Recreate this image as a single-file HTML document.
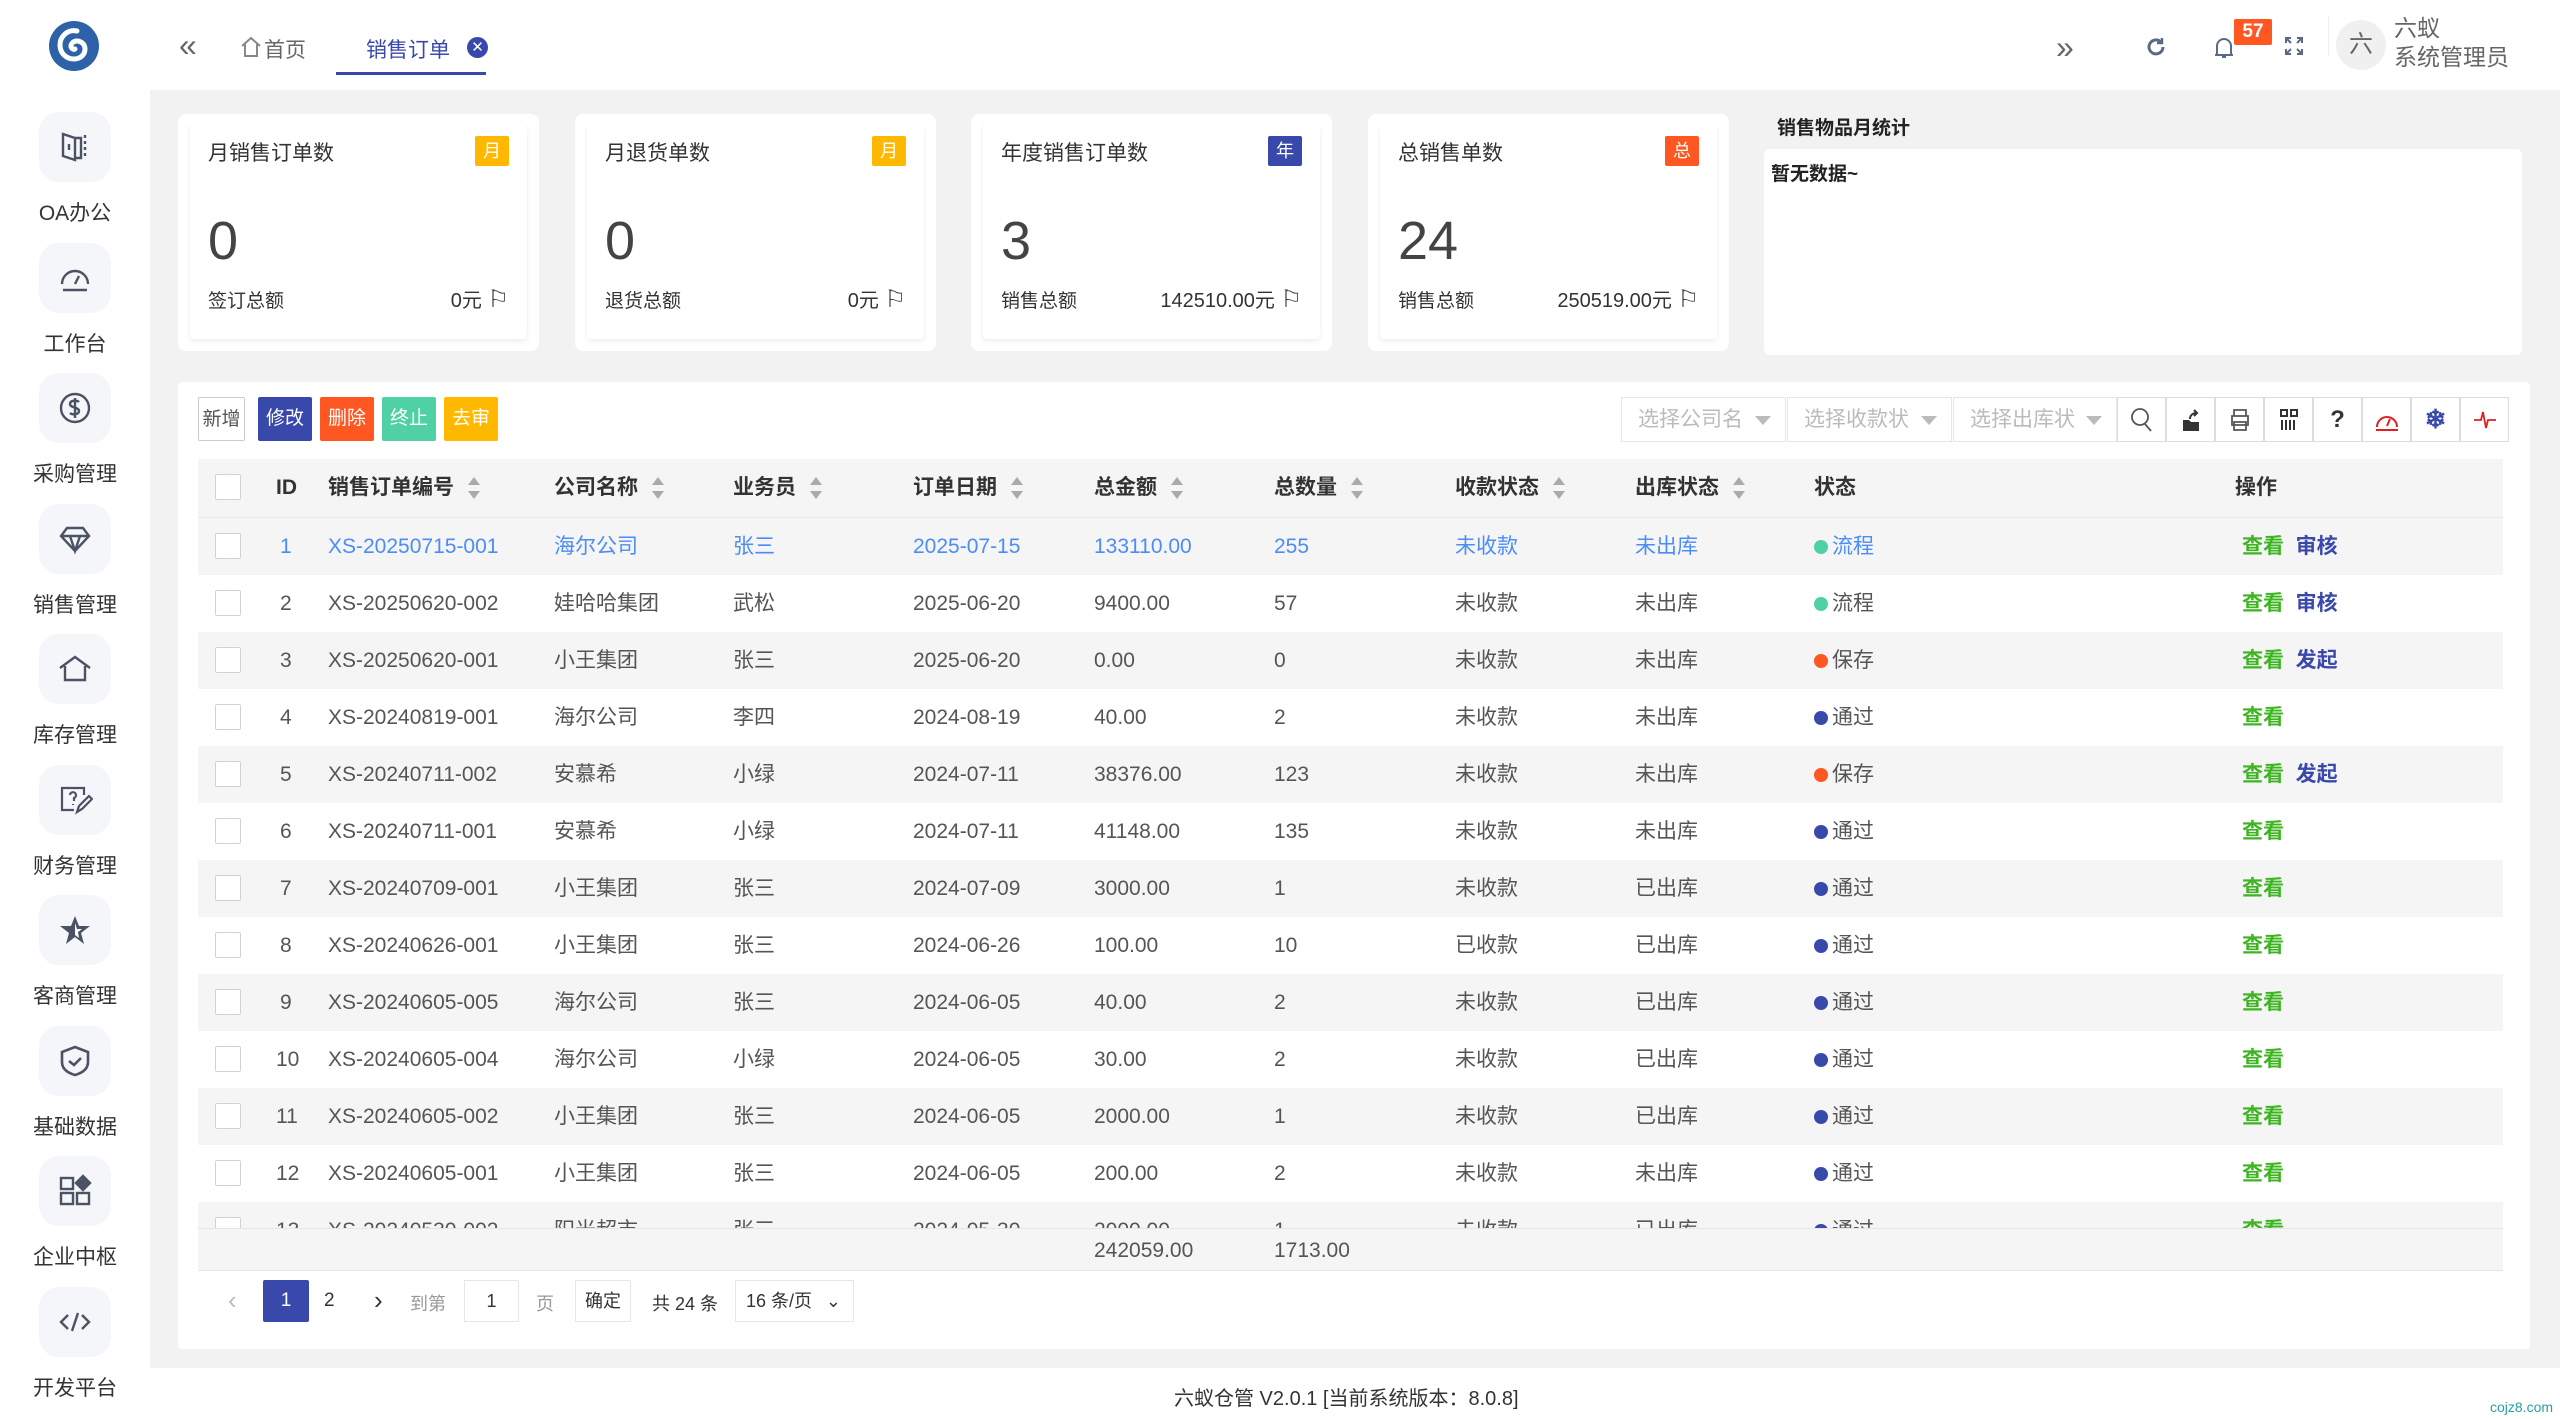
<!DOCTYPE html>
<html><head><meta charset="utf-8"><style>
*{box-sizing:border-box;margin:0;padding:0}
body{width:2560px;height:1419px;overflow:hidden;background:#f2f2f2;font-family:"Liberation Sans","Noto Sans CJK SC",sans-serif;color:#333;position:relative}
.abs{position:absolute}
#side{left:0;top:0;width:150px;height:1419px;background:#fff}
.ib{position:absolute;left:39px;width:72px;height:70px;background:#f4f6fa;border-radius:20px;display:flex;align-items:center;justify-content:center}
.lb{position:absolute;left:0;width:150px;text-align:center;font-size:21px;color:#333}
#hdr{left:150px;top:0;width:2410px;height:90px;background:#fff}
.card{position:absolute;top:114px;height:237px;background:#fff;border-radius:8px}
.card .in{position:absolute;left:12px;top:10px;right:12px;bottom:12px;box-shadow:0 2px 6px rgba(0,0,0,.08);border-radius:4px}
.ct{position:absolute;left:30px;top:23px;font-size:21px;color:#333}
.bd{position:absolute;right:30px;top:22px;width:34px;height:30px;color:#fff;font-size:18px;text-align:center;line-height:30px;border-radius:2px}
.num{position:absolute;left:30px;top:96px;font-size:54px;color:#444}
.bl{position:absolute;left:30px;top:172px;font-size:19px;color:#333}
.br{position:absolute;right:30px;top:170px;font-size:20px;color:#333}
.btn{position:absolute;top:397px;height:44px;color:#fff;font-size:19px;line-height:44px;text-align:center;border-radius:2px}
.sel{position:absolute;top:397px;height:45px;border:1px solid #e6e6e6;color:#bbb;font-size:21px;line-height:43px;padding-left:16px}
.sel:after{content:"";position:absolute;right:14px;top:18px;border:8px solid transparent;border-top:9px solid #bbb}
.tb{position:absolute;top:397px;width:49px;height:45px;border:1px solid #ddd;display:flex;align-items:center;justify-content:center}
.row{position:absolute;left:198px;width:2305px;height:57px;font-size:21px;color:#555}
.row div{position:absolute;top:0;line-height:57px;white-space:nowrap}
.cb{width:26px;height:26px;border:1px solid #d2d2d2;background:#fff;border-radius:2px;top:15px!important;left:17px}
.hd{font-weight:bold;color:#333}
.so{display:inline-block;vertical-align:middle;margin-left:14px;width:12px;height:22px;position:relative}
.so:before{content:"";position:absolute;left:0;top:0;border:6px solid transparent;border-bottom:8px solid #aaa;border-top:0}
.so:after{content:"";position:absolute;left:0;bottom:0;border:6px solid transparent;border-top:8px solid #aaa;border-bottom:0}
.dot{display:inline-block;width:14px;height:14px;border-radius:50%;margin-right:4px;vertical-align:-1px}
.g{color:#3cb521;font-weight:bold}.bl2{color:#3949ab;font-weight:bold}
.lk div{color:#4a8df8}
</style></head><body>
<div id="side" class="abs">
<svg class="abs" style="left:47px;top:19px" width="54" height="54" viewBox="0 0 54 54"><circle cx="27" cy="27" r="25" fill="#2d62a8"/><path d="M30 12c-9-2-17 5-17 14 0 8 6 14 14 14 6 0 11-4 11-10 0-5-4-8-8-8-4 0-6 3-6 5 0 2 2 4 4 3" fill="none" stroke="#fff" stroke-width="5" stroke-linecap="round"/></svg>
<div class="ib" style="top:112px"><svg width="36" height="36" viewBox="0 0 36 36" fill="none" stroke="#4a5263" stroke-width="2.4"><path d="M6 5l12 4v22L6 27z M18 9h6v20h-6"/><path d="M28 6v24" stroke-dasharray="3 3"/><path d="M12 15v6"/></svg></div>
<div class="lb" style="top:197px">OA办公</div>
<div class="ib" style="top:243px"><svg width="36" height="36" viewBox="0 0 36 36" fill="none" stroke="#4a5263" stroke-width="2.4"><path d="M5 24a13 13 0 1 1 26 0"/><path d="M18 24l4-8"/><path d="M6 30h24"/></svg></div>
<div class="lb" style="top:328px">工作台</div>
<div class="ib" style="top:373px"><svg width="36" height="36" viewBox="0 0 36 36" fill="none" stroke="#4a5263" stroke-width="2.4"><circle cx="18" cy="18" r="14"/><path d="M22 12c-2-2-9-2-9 2s9 3 9 7-7 4-9 2M18 8v20"/></svg></div>
<div class="lb" style="top:458px">采购管理</div>
<div class="ib" style="top:504px"><svg width="36" height="36" viewBox="0 0 36 36" fill="none" stroke="#4a5263" stroke-width="2.4"><path d="M10 7h16l6 8-14 15L4 15z M4 15h28 M13 15l5 15 5-15"/></svg></div>
<div class="lb" style="top:589px">销售管理</div>
<div class="ib" style="top:634px"><svg width="36" height="36" viewBox="0 0 36 36" fill="none" stroke="#4a5263" stroke-width="2.4"><path d="M3 17L18 6l15 11M8 15v14h20V15"/></svg></div>
<div class="lb" style="top:719px">库存管理</div>
<div class="ib" style="top:765px"><svg width="36" height="36" viewBox="0 0 36 36" fill="none" stroke="#4a5263" stroke-width="2.2"><path d="M27 13V6H5v22h12"/><path d="M13 13a3 3 0 1 1 4 3v3M16 22v1"/><path d="M20 30l2-6 10-10 3 3-10 10z"/></svg></div>
<div class="lb" style="top:850px">财务管理</div>
<div class="ib" style="top:895px"><svg width="36" height="36" viewBox="0 0 36 36"><path d="M18 4l4 10h11l-9 7 3 11-9-7-9 7 3-11-9-7h11z" fill="#4a5263"/><path d="M18 11l2 6h5l-4 3 1 6-4-3z" fill="#fff"/></svg></div>
<div class="lb" style="top:980px">客商管理</div>
<div class="ib" style="top:1026px"><svg width="36" height="36" viewBox="0 0 36 36" fill="none" stroke="#4a5263" stroke-width="2.6"><path d="M18 4l13 5v10c0 7-6 11-13 13C11 30 5 26 5 19V9z"/><path d="M12 18l5 4 7-7"/></svg></div>
<div class="lb" style="top:1111px">基础数据</div>
<div class="ib" style="top:1156px"><svg width="36" height="36" viewBox="0 0 36 36" fill="none" stroke="#4a5263" stroke-width="2.4"><rect x="4" y="5" width="12" height="11"/><rect x="4" y="20" width="12" height="11"/><rect x="20" y="20" width="12" height="11"/><path d="M26 3l7 7-7 7-7-7z" fill="#4a5263"/></svg></div>
<div class="lb" style="top:1241px">企业中枢</div>
<div class="ib" style="top:1287px"><svg width="36" height="36" viewBox="0 0 36 36" fill="none" stroke="#4a5263" stroke-width="2.4"><path d="M11 11l-7 7 7 7M25 11l7 7-7 7M21 9l-6 18"/></svg></div>
<div class="lb" style="top:1372px">开发平台</div>
</div>

<div id="hdr" class="abs"></div>
<div class="abs" style="left:179px;top:27px;font-size:32px;color:#666">«</div>
<svg class="abs" style="left:240px;top:36px" width="22" height="22" viewBox="0 0 22 22" fill="none" stroke="#888" stroke-width="2"><path d="M2 10L11 2l9 8M5 8v12h12V8"/></svg>
<div class="abs" style="left:264px;top:34px;font-size:21px;color:#666">首页</div>
<div class="abs" style="left:366px;top:34px;font-size:21px;color:#3949ab">销售订单</div>
<div class="abs" style="left:467px;top:37px;width:21px;height:21px;border-radius:50%;background:#3949ab;color:#fff;font-size:15px;text-align:center;line-height:21px">✕</div>
<div class="abs" style="left:336px;top:72px;width:150px;height:3px;background:#3949ab"></div>
<div class="abs" style="left:2056px;top:29px;font-size:32px;color:#666">»</div>
<svg class="abs" style="left:2145px;top:36px" width="22" height="22" viewBox="0 0 22 22" fill="none" stroke="#5a6a85" stroke-width="3"><path d="M18 11a7 7 0 1 1-2-5"/><path d="M17 2v5h-5" stroke-width="2.5"/></svg>
<svg class="abs" style="left:2213px;top:36px" width="22" height="24" viewBox="0 0 22 24" fill="none" stroke="#5a6a85" stroke-width="2"><path d="M4 18V10a7 7 0 0 1 14 0v8M2 19h18M9 21h4"/></svg>
<div class="abs" style="left:2234px;top:19px;width:38px;height:26px;background:#ff5722;color:#fff;font-weight:bold;font-size:19px;text-align:center;line-height:26px;border-radius:2px">57</div>
<svg class="abs" style="left:2285px;top:37px" width="18" height="18" viewBox="0 0 18 18" fill="none" stroke="#5a6a85" stroke-width="2"><path d="M1 6V1h5M12 1h5v5M17 12v5h-5M6 17H1v-5M2 2l4 4M16 2l-4 4M16 16l-4-4M2 16l4-4"/></svg>
<div class="abs" style="left:2328px;top:16px;width:1px;height:40px;background:#eee"></div>
<div class="abs" style="left:2336px;top:20px;width:50px;height:50px;border-radius:50%;background:#f0f0f0;color:#666;font-size:24px;text-align:center;line-height:50px">六</div>
<div class="abs" style="left:2394px;top:14px;font-size:23px;color:#666;line-height:29px">六蚁<br>系统管理员</div>

<div class="card" style="left:178px;width:361px"><div class="in"></div><div class="ct">月销售订单数</div><div class="bd" style="background:#ffb800">月</div><div class="num">0</div><div class="bl">签订总额</div><div class="br">0元 <span style="font-size:24px">⚐</span></div></div>
<div class="card" style="left:575px;width:361px"><div class="in"></div><div class="ct">月退货单数</div><div class="bd" style="background:#ffb800">月</div><div class="num">0</div><div class="bl">退货总额</div><div class="br">0元 <span style="font-size:24px">⚐</span></div></div>
<div class="card" style="left:971px;width:361px"><div class="in"></div><div class="ct">年度销售订单数</div><div class="bd" style="background:#3949ab">年</div><div class="num">3</div><div class="bl">销售总额</div><div class="br">142510.00元 <span style="font-size:24px">⚐</span></div></div>
<div class="card" style="left:1368px;width:361px"><div class="in"></div><div class="ct">总销售单数</div><div class="bd" style="background:#ff5722">总</div><div class="num">24</div><div class="bl">销售总额</div><div class="br">250519.00元 <span style="font-size:24px">⚐</span></div></div>
<div class="abs" style="left:1777px;top:113px;font-size:19px;font-weight:bold;color:#222">销售物品月统计</div>
<div class="abs" style="left:1764px;top:149px;width:758px;height:206px;background:#fff;border-radius:6px"></div>
<div class="abs" style="left:1771px;top:159px;font-size:19px;font-weight:bold;color:#222">暂无数据~</div>

<div class="abs" style="left:178px;top:382px;width:2352px;height:967px;background:#fff;border-radius:4px"></div>
<div class="btn" style="left:198px;width:47px;background:#fff;border:1px solid #ccc;color:#555">新增</div>
<div class="btn" style="left:258px;width:54px;background:#3949ab">修改</div>
<div class="btn" style="left:320px;width:54px;background:#ff5722">删除</div>
<div class="btn" style="left:382px;width:54px;background:#4fd1a5">终止</div>
<div class="btn" style="left:444px;width:54px;background:#ffb800">去审</div>
<div class="sel" style="left:1621px;width:165px">选择公司名</div>
<div class="sel" style="left:1787px;width:165px">选择收款状</div>
<div class="sel" style="left:1953px;width:164px">选择出库状</div>
<div class="tb" style="left:2117px"><svg width="24" height="26" viewBox="0 0 24 26" fill="none" stroke="#555" stroke-width="1.8"><circle cx="10" cy="10" r="8"/><path d="M15 17l6 7"/></svg></div>
<div class="tb" style="left:2166px"><svg width="22" height="24" viewBox="0 0 22 24"><path d="M3 12h6l2 2h8v9H3z" fill="#333"/><path d="M10 11c0-4 3-6 7-6M14 2l3 3-3 3" fill="none" stroke="#333" stroke-width="2"/></svg></div>
<div class="tb" style="left:2215px"><svg width="22" height="24" viewBox="0 0 22 24" fill="none" stroke="#555" stroke-width="1.8"><path d="M5 8V2h12v6M3 8h16v9H3zM5 14h12v8H5z"/></svg></div>
<div class="tb" style="left:2264px"><svg width="20" height="24" viewBox="0 0 20 24" fill="none" stroke="#333" stroke-width="2"><rect x="2" y="2" width="6" height="6"/><rect x="12" y="2" width="6" height="6"/><path d="M3 12v10M7 12v10M11 12v10M15 12v10"/></svg></div>
<div class="tb" style="left:2313px;font-weight:bold;font-size:24px;color:#333">?</div>
<div class="tb" style="left:2362px"><svg width="26" height="22" viewBox="0 0 26 22" fill="none" stroke="#e02020" stroke-width="2"><path d="M3 18a10 10 0 1 1 20 0"/><path d="M13 17l3-7M2 21h22"/></svg></div>
<div class="tb" style="left:2411px;color:#3949ab;font-size:26px;font-weight:bold">❄</div>
<div class="tb" style="left:2460px"><svg width="24" height="22" viewBox="0 0 24 22" fill="none" stroke="#e02020" stroke-width="1.8"><path d="M1 11h7l2-8 3 16 2-8h8"/></svg></div>

<div class="abs" style="left:198px;top:459px;width:2305px;height:812px;border:1px solid #eee;overflow:hidden"></div>
<div class="row" style="top:459px;height:59px;background:#f5f5f5;border-bottom:1px solid #e8e8e8">
<div class="cb"></div>
<div class="hd" style="left:78px">ID</div>
<div class="hd" style="left:130px">销售订单编号<span class="so"></span></div>
<div class="hd" style="left:356px">公司名称<span class="so"></span></div>
<div class="hd" style="left:535px">业务员<span class="so"></span></div>
<div class="hd" style="left:715px">订单日期<span class="so"></span></div>
<div class="hd" style="left:896px">总金额<span class="so"></span></div>
<div class="hd" style="left:1076px">总数量<span class="so"></span></div>
<div class="hd" style="left:1257px">收款状态<span class="so"></span></div>
<div class="hd" style="left:1437px">出库状态<span class="so"></span></div>
<div class="hd" style="left:1616px">状态</div>
<div class="hd" style="left:2037px">操作</div>
</div>
<div class="abs" style="left:198px;top:518px;width:2305px;height:710px;overflow:hidden" id="bodyw"></div>
<div class="abs" style="left:198px;top:1228px;width:2305px;height:43px;background:#f5f5f5;border-top:1px solid #e6e6e6;border-bottom:1px solid #e6e6e6;font-size:21px;color:#555">
<div class="abs" style="left:896px;top:10px">242059.00</div><div class="abs" style="left:1076px;top:10px">1713.00</div></div>
<div class="abs" style="left:228px;top:1285px;font-size:26px;color:#bbb">‹</div>
<div class="abs" style="left:263px;top:1280px;width:46px;height:42px;background:#3949ab;color:#fff;font-size:19px;text-align:center;line-height:42px;border-radius:2px">1</div>
<div class="abs" style="left:324px;top:1290px;font-size:19px;color:#333">2</div>
<div class="abs" style="left:374px;top:1285px;font-size:26px;color:#333">›</div>
<div class="abs" style="left:410px;top:1290px;font-size:18px;color:#999">到第</div>
<div class="abs" style="left:464px;top:1280px;width:55px;height:42px;border:1px solid #e6e6e6;text-align:center;line-height:40px;font-size:18px;color:#333">1</div>
<div class="abs" style="left:536px;top:1290px;font-size:18px;color:#999">页</div>
<div class="abs" style="left:575px;top:1280px;width:56px;height:42px;border:1px solid #e6e6e6;text-align:center;line-height:40px;font-size:18px;color:#333">确定</div>
<div class="abs" style="left:652px;top:1290px;font-size:18px;color:#333">共 24 条</div>
<div class="abs" style="left:735px;top:1280px;width:119px;height:42px;border:1px solid #e6e6e6;line-height:40px;font-size:18px;color:#333;padding-left:10px">16 条/页 <span style="position:absolute;right:12px">⌄</span></div>

<div class="abs" style="left:150px;top:1368px;width:2410px;height:51px;background:#fff"></div>
<div class="abs" style="left:1174px;top:1382px;font-size:20px;color:#333">六蚁仓管 V2.0.1 [当前系统版本：8.0.8]</div>
<div class="abs" style="left:2490px;top:1399px;font-size:14px;color:#29a0a0">cojz8.com</div>

<script>
var d=[
[1,"XS-20250715-001","海尔公司","张三","2025-07-15","133110.00","255","未收款","未出库",0,["审核"]],
[2,"XS-20250620-002","娃哈哈集团","武松","2025-06-20","9400.00","57","未收款","未出库",0,["审核"]],
[3,"XS-20250620-001","小王集团","张三","2025-06-20","0.00","0","未收款","未出库",1,["发起"]],
[4,"XS-20240819-001","海尔公司","李四","2024-08-19","40.00","2","未收款","未出库",2,[]],
[5,"XS-20240711-002","安慕希","小绿","2024-07-11","38376.00","123","未收款","未出库",1,["发起"]],
[6,"XS-20240711-001","安慕希","小绿","2024-07-11","41148.00","135","未收款","未出库",2,[]],
[7,"XS-20240709-001","小王集团","张三","2024-07-09","3000.00","1","未收款","已出库",2,[]],
[8,"XS-20240626-001","小王集团","张三","2024-06-26","100.00","10","已收款","已出库",2,[]],
[9,"XS-20240605-005","海尔公司","张三","2024-06-05","40.00","2","未收款","已出库",2,[]],
[10,"XS-20240605-004","海尔公司","小绿","2024-06-05","30.00","2","未收款","已出库",2,[]],
[11,"XS-20240605-002","小王集团","张三","2024-06-05","2000.00","1","未收款","已出库",2,[]],
[12,"XS-20240605-001","小王集团","张三","2024-06-05","200.00","2","未收款","未出库",2,[]],
[13,"XS-20240530-002","阳光超市","张三","2024-05-30","2000.00","1","未收款","已出库",2,[]]];
var st=[["流程","#4fd1a5"],["保存","#ff5722"],["通过","#3949ab"]];
var L=[130,356,535,715,896,1076,1257,1437];
var h="";
d.forEach(function(r,i){
 var s='<div class="row'+(i==0?' lk':'')+'" style="left:0;top:'+(i*57)+'px;background:'+(i%2==0?'#f5f5f5':'#fff')+'"><div class="cb"></div><div style="left:'+(r[0]>9?78:82)+'px">'+r[0]+'</div>';
 for(var k=0;k<8;k++)s+='<div style="left:'+L[k]+'px">'+r[k+1]+'</div>';
 s+='<div style="left:1616px"><span class="dot" style="background:'+st[r[9]][1]+'"></span><span style="color:'+(i==0?'#4a8df8':'#555')+'">'+st[r[9]][0]+'</span></div>';
 s+='<div style="left:2044px"><span class="g">查看</span>'+(r[10].length?' &nbsp;<span class="bl2">'+r[10][0]+'</span>':'')+'</div></div>';
 h+=s;});
document.getElementById("bodyw").innerHTML=h;
</script>
</body></html>
